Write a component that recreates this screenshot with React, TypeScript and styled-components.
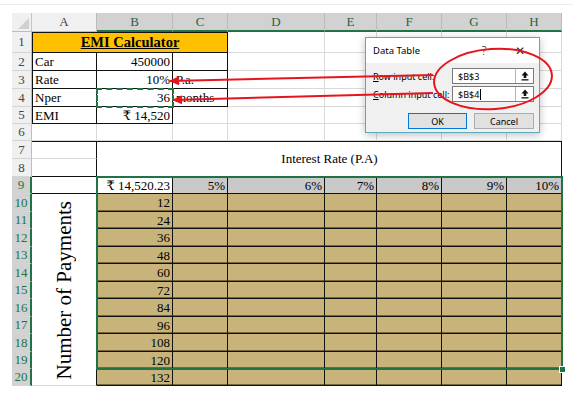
import React from 'react';
import styled, { createGlobalStyle, css } from 'styled-components';

const SERIF = `"Liberation Serif", "DejaVu Serif", serif`;
const UI = `"Noto Sans", "Open Sans", sans-serif`;
const GREEN = '#217346';
const GRID = '#d9d9d9';
const BLACK = '#111';
const ORANGE = '#ffc000';
const TAN = '#c8b47b';
const GREY = '#c9c9c9';
const RED = '#e8141c';

const GlobalStyle = createGlobalStyle`
  html, body { margin: 0; padding: 0; background: #fff; }
  #root { width: 573px; height: 398px; }
`;

const Page = styled.div`
  position: relative;
  width: 573px;
  height: 398px;
  overflow: hidden;
  background: #fff;
  font-family: ${SERIF};
`;

const TopStrip = styled.div`
  height: 13px;
  box-sizing: border-box;
  padding-top: 4px;
  &::before {
    content: '';
    display: block;
    height: 1px;
    background: #ececec;
  }
`;

const Sheet = styled.div`
  margin-left: 12px;
  width: 550px;
  display: grid;
  grid-template-columns: 20px 65px 76px 55px 97px 52px 65px 65px 55px;
  grid-template-rows: 19px 21px 18px 18px 18px 17px 17px 18px 18px 17px 18px 17px 18px 17px 18px 17px 18px 17px 18px 17px 17px;
`;

const Corner = styled.div`
  grid-column: 1;
  grid-row: 1;
  position: relative;
  background: #f0f0f0;
  box-sizing: border-box;
  border-right: 1px solid #c4c4c4;
  border-bottom: 1px solid #bdbdbd;
  &::after {
    content: '';
    position: absolute;
    right: 2px;
    bottom: 2px;
    border-style: solid;
    border-width: 0 0 11px 11px;
    border-color: transparent transparent #d0d0d0 transparent;
  }
`;

const ColHead = styled.div<{ $c: number; $sel?: boolean }>`
  grid-column: ${p => p.$c};
  grid-row: 1;
  box-sizing: border-box;
  display: flex;
  align-items: center;
  justify-content: center;
  font-size: 13px;
  background: ${p => (p.$sel ? '#d2d2d2' : '#f0f0f0')};
  color: ${p => (p.$sel ? '#2f5e43' : '#444')};
  border-right: 1px solid #bcbcbc;
  border-bottom: ${p => (p.$sel ? `2px solid ${GREEN}` : '1px solid #bdbdbd')};
`;

const RowHead = styled.div<{ $r: number; $sel?: boolean }>`
  grid-column: 1;
  grid-row: ${p => p.$r};
  box-sizing: border-box;
  display: flex;
  align-items: center;
  justify-content: center;
  font-size: 13px;
  background: ${p => (p.$sel ? '#d2d2d2' : '#f0f0f0')};
  color: ${p => (p.$sel ? GREEN : '#444')};
  border-bottom: 1px solid #d4d4d4;
  border-right: ${p => (p.$sel ? `2px solid ${GREEN}` : '1px solid #bdbdbd')};
`;

type CellProps = {
  $c: number;
  $r: number;
  $cs?: number;
  $rs?: number;
  $bg?: string;
  $align?: 'left' | 'right' | 'center';
  $rb?: boolean;
  $bb?: boolean;
  $tb?: boolean;
  $lb?: boolean;
  $heavy?: boolean;
};

const Cell = styled.div<CellProps>`
  grid-column: ${p => p.$c} / span ${p => p.$cs ?? 1};
  grid-row: ${p => p.$r} / span ${p => p.$rs ?? 1};
  box-sizing: border-box;
  display: flex;
  align-items: center;
  justify-content: ${p => (p.$align === 'right' ? 'flex-end' : p.$align === 'center' ? 'center' : 'flex-start')};
  padding: 1px 2px 0 3px;
  font-size: 13px;
  color: #000;
  white-space: nowrap;
  background: ${p => p.$bg ?? '#fff'};
  border-right: 1px solid ${p => (p.$rb ? BLACK : GRID)};
  border-bottom: 1px solid ${p => (p.$bb ? BLACK : GRID)};
  ${p =>
    (p.$tb || p.$lb || p.$heavy) &&
    css`
      box-shadow: ${[
        p.$tb ? `inset 0 1px 0 ${BLACK}` : '',
        p.$lb ? `inset 1px 0 0 ${BLACK}` : '',
        p.$heavy ? 'inset 0 -1px 0 rgba(50, 38, 10, 0.55)' : '',
      ]
        .filter(Boolean)
        .join(', ')};
    `}
`;

const Title = styled.span`
  font-size: 14.5px;
  font-weight: bold;
  text-decoration: underline;
`;

const VerticalLabel = styled.span`
  writing-mode: vertical-rl;
  transform: rotate(180deg);
  font-size: 21px;
  white-space: nowrap;
`;

const Selection = styled.div`
  grid-column: 3 / span 7;
  grid-row: 10 / span 11;
  margin: -1px -1px -1px -1px;
  border: 2px solid ${GREEN};
  position: relative;
  pointer-events: none;
  z-index: 2;
  &::after {
    content: '';
    position: absolute;
    right: -5px;
    bottom: -5px;
    width: 5px;
    height: 5px;
    background: ${GREEN};
    border: 1px solid #fff;
  }
`;

const CopyMarquee = styled.div`
  grid-column: 3;
  grid-row: 5;
  margin: -1px -1px -1px -1px;
  border: 2px dashed ${GREEN};
  pointer-events: none;
  z-index: 2;
`;

/* ---------- Dialog ---------- */

const Dialog = styled.div`
  position: absolute;
  left: 365px;
  top: 37px;
  width: 175px;
  height: 96px;
  box-sizing: border-box;
  border: 1px solid #5ca9bd;
  background: #f0f0f0;
  box-shadow: 0 2px 8px rgba(0, 0, 0, 0.25);
  font-family: ${UI};
  font-size: 9px;
  color: #000;
  z-index: 5;
`;

const TitleBar = styled.div`
  height: 25px;
  background: #fff;
  display: flex;
  align-items: center;
  padding-left: 7px;
  padding-right: 9px;
  font-size: 9.5px;
`;

const TitleText = styled.span`
  flex: 1;
`;

const TitleControl = styled.span<{ $gap: number }>`
  width: 20px;
  margin-left: ${p => p.$gap}px;
  text-align: center;
  font-size: 12px;
  font-weight: 300;
  color: #222;
`;

const DialogBody = styled.div`
  padding: 5px 5px 0 7px;
  display: flex;
  flex-direction: column;
  gap: 2px;
`;

const FieldRow = styled.div`
  display: flex;
  align-items: center;
  justify-content: space-between;
  height: 16px;
`;

const Label = styled.span`
  white-space: nowrap;
`;

const Accel = styled.span`
  text-decoration: underline;
`;

const InputBox = styled.div`
  width: 82px;
  height: 16px;
  box-sizing: border-box;
  background: #fff;
  border: 1px solid #7a7a7a;
  display: flex;
  align-items: stretch;
`;

const InputText = styled.span`
  flex: 1;
  display: flex;
  align-items: center;
  padding-left: 5px;
  font-size: 9px;
`;

const Caret = styled.span`
  display: inline-block;
  width: 1px;
  height: 11px;
  background: #000;
  margin-left: 1px;
`;

const PickButton = styled.span`
  width: 17px;
  border-left: 1px solid #b5b5b5;
  display: flex;
  align-items: center;
  justify-content: center;
`;

const ButtonRow = styled.div`
  display: flex;
  justify-content: flex-end;
  gap: 7px;
  margin-top: 9px;
`;

const DlgButton = styled.div<{ $primary?: boolean }>`
  width: ${p => (p.$primary ? 59 : 60)}px;
  height: 16px;
  box-sizing: border-box;
  display: flex;
  align-items: center;
  justify-content: center;
  background: #e1e1e1;
  border: 1px solid ${p => (p.$primary ? '#0078d7' : '#adadad')};
  font-size: 9px;
`;

const Overlay = styled.svg`
  position: absolute;
  left: 0;
  top: 0;
  width: 573px;
  height: 398px;
  pointer-events: none;
  z-index: 10;
`;

const PickIcon = () => (
  <svg width="8" height="10" viewBox="0 0 8 10">
    <path d="M4 0.5 L7.5 4.5 H5.3 V7 H2.7 V4.5 H0.5 Z" fill="#111" />
    <rect x="0.5" y="8.2" width="7" height="1.3" fill="#111" />
  </svg>
);

type Spec = {
  c: number;
  r: number;
  cs?: number;
  rs?: number;
  text?: React.ReactNode;
  align?: 'left' | 'right' | 'center';
  bg?: string;
  rb?: boolean;
  bb?: boolean;
  tb?: boolean;
  lb?: boolean;
  heavy?: boolean;
};

const COLS = ['A', 'B', 'C', 'D', 'E', 'F', 'G', 'H'];

function buildSpecs(): Spec[] {
  const s: Spec[] = [];
  s.push({ c: 2, r: 2, cs: 3, bg: ORANGE, text: <Title>EMI Calculator</Title>, align: 'center', rb: true, bb: true, tb: true, lb: true });
  const top: [string, string, string][] = [
    ['Car', '450000', ''],
    ['Rate', '10%', 'P.a.'],
    ['Nper', '36', 'months'],
  ];
  top.forEach((row, i) => {
    const r = 3 + i;
    s.push({ c: 2, r, text: row[0], align: 'left', rb: true, bb: true, lb: true });
    s.push({ c: 3, r, text: row[1], align: 'right', rb: true, bb: true });
    s.push({ c: 4, r, text: row[2], align: 'left', rb: true, bb: true });
  });
  s.push({ c: 2, r: 6, text: 'EMI', align: 'left', rb: true, bb: true, lb: true });
  s.push({ c: 3, r: 6, text: '₹ 14,520', align: 'right', rb: true, bb: true });

  s.push({ c: 2, r: 8, rb: true, tb: true });
  s.push({ c: 2, r: 9, rb: true, bb: true });
  s.push({ c: 3, r: 8, cs: 7, rs: 2, text: 'Interest Rate (P.A)', align: 'center', rb: true, bb: true, tb: true });

  s.push({ c: 2, r: 10, rb: true, bb: true });
  s.push({ c: 3, r: 10, text: '₹ 14,520.23', align: 'right', rb: true, bb: true });
  ['5%', '6%', '7%', '8%', '9%', '10%'].forEach((t, i) => {
    s.push({ c: 4 + i, r: 10, text: t, align: 'right', bg: GREY, rb: true, bb: true });
  });
  s.push({ c: 2, r: 11, rs: 11, rb: true, align: 'center', text: <VerticalLabel>Number of Payments</VerticalLabel> });
  for (let i = 0; i < 11; i++) {
    const r = 11 + i;
    s.push({ c: 3, r, text: String(12 * (i + 1)), align: 'right', bg: TAN, rb: true, bb: true, heavy: true });
    for (let c = 4; c <= 9; c++) s.push({ c, r, bg: TAN, rb: true, bb: true, heavy: true });
  }
  return s;
}

export default function App() {
  const specs = buildSpecs();
  const covered = new Set<string>();
  specs.forEach(sp => {
    for (let dc = 0; dc < (sp.cs ?? 1); dc++)
      for (let dr = 0; dr < (sp.rs ?? 1); dr++) covered.add(`${sp.c + dc}-${sp.r + dr}`);
  });
  const blanks: Spec[] = [];
  for (let r = 2; r <= 21; r++)
    for (let c = 2; c <= 9; c++) if (!covered.has(`${c}-${r}`)) blanks.push({ c, r });

  const all = [...specs, ...blanks];

  return (
    <Page>
      <GlobalStyle />
      <TopStrip />
      <Sheet>
        <Corner />
        {COLS.map((l, i) => (
          <ColHead key={l} $c={i + 2} $sel={i > 0}>
            {l}
          </ColHead>
        ))}
        {Array.from({ length: 20 }, (_, i) => (
          <RowHead key={i} $r={i + 2} $sel={i + 1 >= 9}>
            {i + 1}
          </RowHead>
        ))}
        {all.map(sp => (
          <Cell
            key={`${sp.c}-${sp.r}`}
            $c={sp.c}
            $r={sp.r}
            $cs={sp.cs}
            $rs={sp.rs}
            $bg={sp.bg}
            $align={sp.align}
            $rb={sp.rb}
            $bb={sp.bb}
            $tb={sp.tb}
            $lb={sp.lb}
            $heavy={sp.heavy}
          >
            {sp.text}
          </Cell>
        ))}
        <CopyMarquee />
        <Selection />
      </Sheet>

      <Dialog>
        <TitleBar>
          <TitleText>Data Table</TitleText>
          <TitleControl $gap={0}>?</TitleControl>
          <TitleControl $gap={16}>✕</TitleControl>
        </TitleBar>
        <DialogBody>
          <FieldRow>
            <Label>
              <Accel>R</Accel>ow input cell:
            </Label>
            <InputBox>
              <InputText>$B$3</InputText>
              <PickButton>
                <PickIcon />
              </PickButton>
            </InputBox>
          </FieldRow>
          <FieldRow>
            <Label>
              <Accel>C</Accel>olumn input cell:
            </Label>
            <InputBox>
              <InputText>
                $B$4
                <Caret />
              </InputText>
              <PickButton>
                <PickIcon />
              </PickButton>
            </InputBox>
          </FieldRow>
          <ButtonRow>
            <DlgButton $primary>OK</DlgButton>
            <DlgButton>Cancel</DlgButton>
          </ButtonRow>
        </DialogBody>
      </Dialog>

      <Overlay viewBox="0 0 573 398">
        <defs>
          <marker id="ah" markerUnits="userSpaceOnUse" markerWidth="10" markerHeight="9" refX="9" refY="4.5" orient="auto">
            <path d="M0,0 L10,4.5 L0,9 Z" fill={RED} />
          </marker>
        </defs>
        <line x1="433" y1="75" x2="170" y2="81" stroke={RED} strokeWidth="2" markerEnd="url(#ah)" />
        <line x1="433" y1="93" x2="173" y2="100" stroke={RED} strokeWidth="2" markerEnd="url(#ah)" />
        <ellipse cx="493" cy="79" rx="59" ry="30" transform="rotate(-4 493 79)" fill="none" stroke={RED} strokeWidth="2" />
      </Overlay>
    </Page>
  );
}
